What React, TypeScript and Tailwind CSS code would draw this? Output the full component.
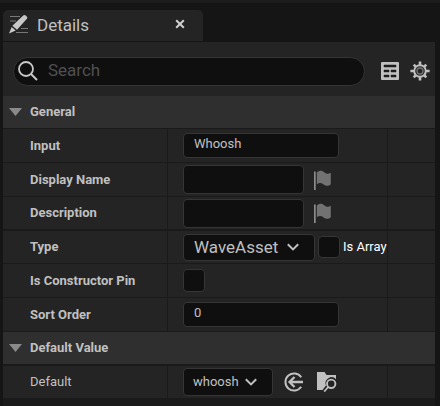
import type { ReactNode } from "react";

const box =
  "rounded-[4px] border border-[#353535] bg-[#0f0f0f] text-[#c0c0c0] outline-none focus:border-[#0070e0]";

function Chevron({ className }: { className: string }) {
  return (
    <svg
      viewBox="0 0 12 8"
      className={`pointer-events-none absolute top-1/2 h-2 w-3 -translate-y-1/2 ${className}`}
      fill="none"
      stroke="#c0c0c0"
      strokeWidth="2"
      aria-hidden="true"
    >
      <path d="M.8 1.2 6 6.4l5.2-5.2" />
    </svg>
  );
}

function Flag() {
  return (
    <button type="button" aria-label="Localize" className="h-5 w-5">
      <svg viewBox="0 0 20 20" className="h-5 w-5">
        <path d="M1 1.5h1.7V20H1z" fill="#8c8c8c" />
        <path
          d="M3.8 2.6C6.2.3 8.9.1 11.2 2.2c2 1.8 4.300 1.900 6.600.6v11.500c-2.400 2-5 1.900-7.200.2-2.200-1.700-4.500-1.900-6.800-.3z"
          fill="#727272"
        />
      </svg>
    </button>
  );
}

function Section({ title, last, children }: { title: string; last?: boolean; children: ReactNode }) {
  return (
    <section>
      <h2
        className={`border-[#1a1a1a] bg-[#2f2f2f] text-[13px] font-bold text-[#c0c0c0] ${
          last ? "border-b-2" : "border-b"
        }`}
      >
        <button type="button" aria-expanded="true" className="flex h-8 w-full items-center gap-2 pl-1.5">
          <svg viewBox="0 0 13 8" className="h-2 w-[13px]" aria-hidden="true">
            <path d="M0 0h13L6.500 8z" fill="#8a8a8a" />
          </svg>
          {title}
        </button>
      </h2>
      {children}
    </section>
  );
}

function Row({
  label,
  id,
  rule = "h-[34px] border-b",
  weight = "font-bold",
  children,
}: {
  label: string;
  id: string;
  rule?: string;
  weight?: string;
  children: ReactNode;
}) {
  return (
    <div className={`grid grid-cols-[165px_1fr_47px] border-[#1a1a1a] bg-[#242424] ${rule}`}>
      <label
        htmlFor={id}
        className={`flex items-center border-r border-[#1a1a1a] pl-[27px] text-[13px] text-[#c0c0c0] ${weight}`}
      >
        {label}
      </label>
      <div className="flex items-center overflow-hidden border-r border-[#1a1a1a] pl-[15px]">
        {children}
      </div>
    </div>
  );
}

export default function App() {
  return (
    <main className="min-h-screen border-t-3 border-[#1c1c1c] bg-[#151515] pt-[7px] pr-[5px] pl-[3px] font-[Roboto,'Liberation_Sans',sans-serif]">
      <div className="flex h-[31px] w-[200px] items-center rounded-t-[5px] bg-[#242424] pl-1.5 text-[#c0c0c0]">
        <svg viewBox="0 0 20 20" className="mb-1 h-5 w-5" aria-hidden="true">
          <path d="M1 2.500h10M1 7h6M12 14.500h7M7 18.500h12" stroke="#777" strokeWidth="1" />
          <path d="M14.200 1.600c.8-.8 1.700-.8 2.500 0l1 .9c.8.8.8 1.700 0 2.500L8 15.800 3.400 11.800z" fill="#c8c8c8" />
          <path d="M2.700 12.900 6.700 16.600 0 19.500z" fill="#c8c8c8" />
        </svg>
        <h1 className="ml-2 text-[17px]">Details</h1>
        <button type="button" aria-label="Close" className="mr-[18px] mb-1 ml-auto">
          <svg viewBox="0 0 10 10" className="h-2.5 w-2.5" stroke="#d0d0d0" strokeWidth="2">
            <path d="m1.200 1.200 7.600 7.600m0-7.600L1.200 8.800" />
          </svg>
        </button>
      </div>

      <div className="mt-px bg-[#1a1a1a] pb-2">
        <div className="flex h-[54px] items-center bg-[#242424] pt-1 pr-[5px] pl-2.5">
          <div className="flex h-[29px] flex-1 items-center rounded-full border border-[#353535] bg-[#0f0f0f] pl-1">
            <svg viewBox="0 0 20 20" className="h-5 w-5" fill="none" stroke="#c8c8c8" strokeWidth="1.800" aria-hidden="true">
              <circle cx="8" cy="8" r="7" />
              <path d="m13 13 6 6" strokeWidth="2" />
            </svg>
            <input
              type="search"
              aria-label="Search"
              placeholder="Search"
              className="ml-2.5 min-w-0 flex-1 bg-transparent text-[17px] text-[#c0c0c0] outline-none placeholder:text-[#505050]"
            />
          </div>
          <button type="button" aria-label="Property matrix" className="ml-4">
            <svg viewBox="0 0 18 18" className="h-[18px] w-[18px]">
              <rect width="18" height="18" rx="1" fill="#c0c0c0" />
              <path d="M3 3h12v2H3zM3 8h5v2H3zM10 8h5v2h-5zM3 13h5v2H3zM10 13h5v2h-5z" fill="#1c1c1c" stroke="#1c1c1c" strokeWidth=".5" />
            </svg>
          </button>
          <button type="button" aria-label="Settings" className="ml-[11px]">
            <svg viewBox="-10 -10 20 20" className="h-5 w-5" stroke="#c0c0c0" fill="none">
              <circle r="5.800" strokeWidth="2" />
              <circle r="3" strokeWidth="1.300" stroke="#777" />
              <path
                d="M0-6v-3.600M0 6v3.600M-6 0h-3.600M6 0h3.600M-4.300-4.300l-2-2M4.300-4.300l2-2M-4.300 4.300l-2 2M4.300 4.300l2 2"
                strokeWidth="2.600"
              />
            </svg>
          </button>
        </div>

        <Section title="General">
          <Row label="Input" id="input">
            <input id="input" defaultValue="Whoosh" className={`h-[25px] w-[156px] px-2.5 pb-1 text-[13px] ${box}`} />
          </Row>
          <Row label="Display Name" id="display-name">
            <input id="display-name" className={`h-[29px] w-[121px] px-2.5 text-[13px] ${box}`} />
            <div className="ml-[9px] flex"><Flag /></div>
          </Row>
          <Row label="Description" id="description" rule="h-[34px] border-b-2">
            <input id="description" className={`h-[29px] w-[121px] px-2.5 text-[13px] ${box}`} />
            <div className="ml-[9px] flex"><Flag /></div>
          </Row>
          <Row label="Type" id="type" rule="h-[33px] border-b">
            <div className="relative shrink-0">
              <select id="type" className={`block h-[27px] w-[132px] appearance-none pl-2.5 text-[17px] ${box}`}>
                <option>WaveAsset</option>
              </select>
              <Chevron className="right-4" />
            </div>
            <input id="is-array" type="checkbox" className={`ml-[3px] h-[22px] w-[22px] shrink-0 appearance-none ${box}`} />
            <label htmlFor="is-array" className="ml-[3px] shrink-0 text-[13px] whitespace-nowrap text-white">
              Is Array
            </label>
          </Row>
          <Row label="Is Constructor Pin" id="constructor-pin">
            <input id="constructor-pin" type="checkbox" className={`h-[23px] w-[22px] appearance-none ${box}`} />
          </Row>
          <Row label="Sort Order" id="sort-order">
            <input id="sort-order" defaultValue="0" inputMode="numeric" className={`h-[25px] w-[156px] px-2.5 pb-1 text-[13px] ${box}`} />
          </Row>
        </Section>

        <Section title="Default Value" last>
          <Row label="Default" id="default" rule="h-8" weight="font-normal">
            <div className="relative">
              <select id="default" className={`block h-7 w-[90px] appearance-none pl-[9px] text-[13px] ${box}`}>
                <option>whoosh</option>
              </select>
              <Chevron className="right-4" />
            </div>
            <button type="button" aria-label="Use selected asset" className="ml-[11px]">
              <svg viewBox="0 0 20 20" className="h-5 w-5" fill="none" stroke="#c0c0c0" strokeWidth="2">
                <path d="M17.200 5.200A8.600 8.600 0 1 0 17.200 14.800" />
                <path d="M19 10H6M10.500 5 5.500 10l5 5" strokeWidth="2.300" />
              </svg>
            </button>
            <button type="button" aria-label="Browse to asset" className="ml-3">
              <svg viewBox="0 0 21 20" className="h-5 w-[21px]">
                <path d="M1 0h7.500l2 3H20v4.200a6 6 0 0 0-10 6.300L6.500 18H1z" fill="#c0c0c0" />
                <circle cx="15.200" cy="11.800" r="4.200" fill="none" stroke="#c0c0c0" strokeWidth="1.900" />
                <path d="m12.200 15-4 4.500" stroke="#c0c0c0" strokeWidth="1.800" />
              </svg>
            </button>
          </Row>
        </Section>
      </div>
    </main>
  );
}
